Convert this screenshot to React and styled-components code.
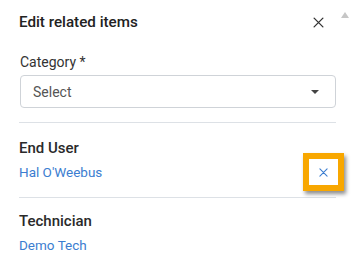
import React from "react";
import styled, { createGlobalStyle } from "styled-components";

const Global = createGlobalStyle`
  html, body { margin: 0; padding: 0; background: #fff; }
  body { font-family: Roboto, "Noto Sans", sans-serif; -webkit-font-smoothing: antialiased; }
`;

const Panel = styled.div`
  position: relative;
  width: 354px;
  height: 273px;
  box-sizing: border-box;
  padding: 0 18px 0 19px;
  background: #fff;
  overflow: hidden;
`;

const Header = styled.div`
  display: flex;
  align-items: center;
  justify-content: space-between;
  height: 44px;
  padding-right: 10px;
`;

const Title = styled.h2`
  margin: 0;
  font-size: 15.2px;
  font-weight: 500;
  color: #222;
`;

const IconButton = styled.button`
  display: flex;
  align-items: center;
  justify-content: center;
  width: 16px;
  height: 16px;
  padding: 0;
  border: 0;
  background: transparent;
  cursor: pointer;
  color: ${(p) => p.$color || "#333"};
`;

const ScrollArrow = styled.div`
  position: absolute;
  top: 12px;
  right: 5px;
  width: 0;
  height: 0;
  border-left: 4px solid transparent;
  border-right: 4px solid transparent;
  border-bottom: 6px solid #c6c6c6;
`;

const Field = styled.div`
  display: flex;
  flex-direction: column;
  padding: 8px 0 0 1px;
`;

const Label = styled.label`
  font-size: 14px;
  color: #333;
  line-height: 20px;
  margin-bottom: 3px;
`;

const SelectBox = styled.div`
  display: flex;
  align-items: center;
  justify-content: space-between;
  height: 33px;
  box-sizing: border-box;
  border: 1px solid #cfd3d8;
  border-radius: 4px;
  padding: 0 16px 0 12px;
  font-size: 14px;
  color: #555;
`;

const Caret = styled.span`
  width: 0;
  height: 0;
  border-left: 4px solid transparent;
  border-right: 4px solid transparent;
  border-top: 4px solid #444;
`;

const Divider = styled.hr`
  margin: ${(p) => p.$top}px 0 0 0;
  border: 0;
  border-top: 1px solid #dde1e6;
  height: 0;
`;

const Section = styled.div`
  display: flex;
  flex-direction: column;
  padding-top: ${(p) => p.$top}px;
`;

const SectionTitle = styled.div`
  font-size: 15px;
  font-weight: 500;
  color: #2a2a2a;
  line-height: 20px;
`;

const Row = styled.div`
  display: flex;
  align-items: center;
  justify-content: space-between;
  height: 24px;
  margin-top: 2px;
`;

const Link = styled.a`
  font-size: 13.5px;
  color: #3b7dd0;
  text-decoration: none;
`;

const Highlight = styled.div`
  position: relative;
  width: 29px;
  height: 26px;
  margin-right: -8px;
  border: 6px solid #f8a700;
  box-shadow: 2px 3px 4px rgba(0, 0, 0, 0.45);
  display: flex;
  align-items: center;
  justify-content: center;
  background: #fff;
  box-sizing: content-box;
`;

const X = ({ size = 10, stroke = 1.3 }) => (
  <svg width={size} height={size} viewBox="0 0 10 10" fill="none">
    <path d="M1 1L9 9M9 1L1 9" stroke="currentColor" strokeWidth={stroke} strokeLinecap="round" />
  </svg>
);

export default function App() {
  return (
    <>
      <Global />
      <Panel>
        <ScrollArrow />
        <Header>
          <Title>Edit related items</Title>
          <IconButton aria-label="Close">
            <X size={11} stroke={1.2} />
          </IconButton>
        </Header>
        <Field>
          <Label>Category *</Label>
          <SelectBox>
            <span>Select</span>
            <Caret />
          </SelectBox>
        </Field>
        <Divider $top={14} />
        <Section $top={15}>
          <SectionTitle>End User</SectionTitle>
          <Row>
            <Link href="#">Hal O'Weebus</Link>
            <Highlight>
              <IconButton $color="#3b7dd0" aria-label="Remove">
                <X size={9} stroke={1.2} />
              </IconButton>
            </Highlight>
          </Row>
        </Section>
        <Divider $top={13} />
        <Section $top={13}>
          <SectionTitle>Technician</SectionTitle>
          <Row>
            <Link href="#">Demo Tech</Link>
          </Row>
        </Section>
      </Panel>
    </>
  );
}
